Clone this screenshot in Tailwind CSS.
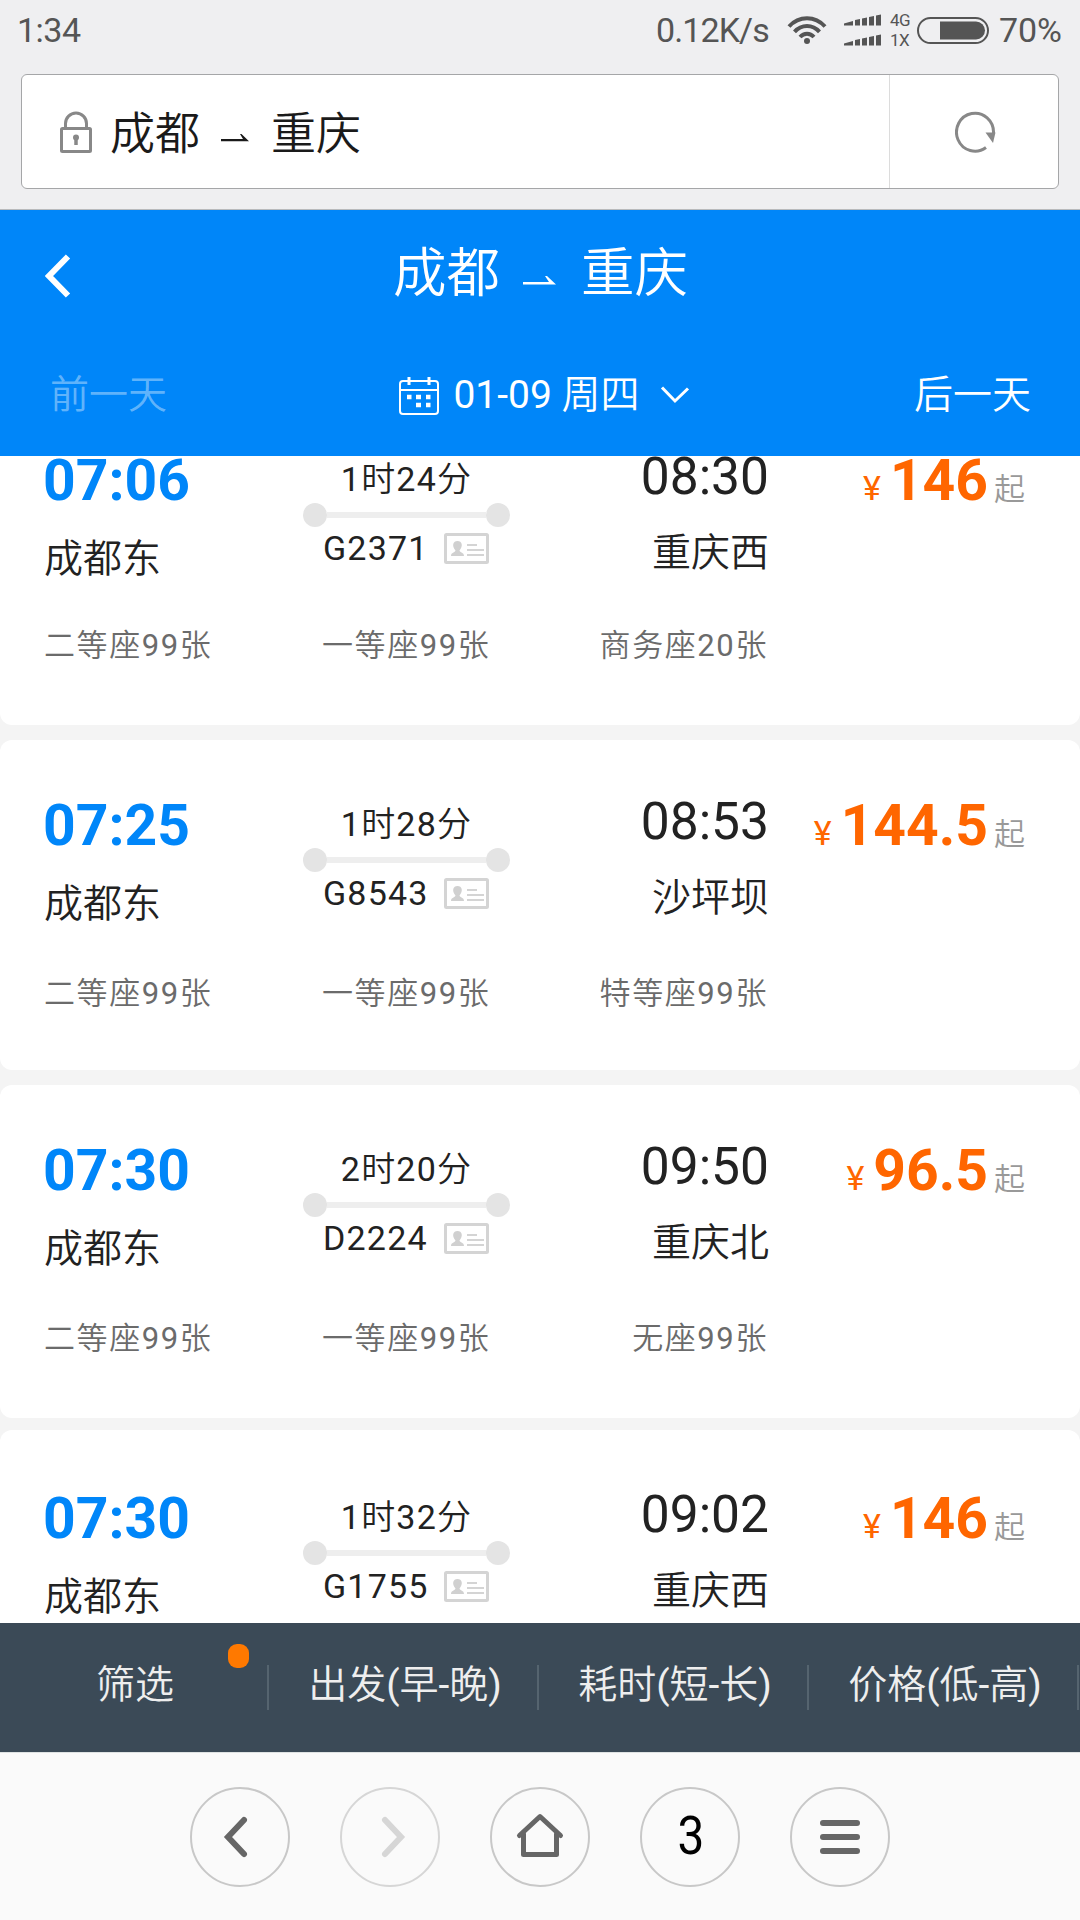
<!DOCTYPE html>
<html lang="zh-CN">
<head>
    <meta charset="UTF-8">
    <meta name="viewport" content="width=device-width, initial-scale=1.0">
    <title>成都 ⇀ 重庆</title>
    <script src="https://cdn.jsdelivr.net/npm/@tailwindcss/browser@4"></script>
</head>
<body class="flex h-[1920px] w-[1080px] flex-col overflow-hidden bg-[#f4f4f4] font-[Roboto,'Noto_Sans_CJK_SC_DemiLight','Noto_Sans_CJK_SC',sans-serif] text-[#222]">

    <!-- Status bar + address bar -->
    <div class="h-[210px] shrink-0 border-b border-[#b9babc] bg-[#efeff1]">
        <div class="flex h-[60px] items-center pl-[17px] pr-[18px] text-[34px] leading-[60px] text-[#555]">
            <span class="tracking-[-0.500px]">1:34</span>
            <span class="ml-auto tracking-[-0.900px]">0.12K/s</span>
            <svg class="ml-[18px] h-[28px] w-[40px]" viewBox="0 0 40 28" fill="none" stroke="#555" stroke-width="4">
                <path d="M2 10.5C12-.5 28-.5 38 10.5M7.500 15.800C14.500 8 25.500 8 32.500 15.800M13 21C17 16.700 23 16.700 27 21"/>
                <circle cx="20" cy="25" r="3" fill="#555" stroke="none"/>
            </svg>
            <svg class="ml-[17px] h-[32px] w-[38px]" viewBox="0 0 38 32" fill="#555">
                <path id="sig" d="M0 11.500V9.500L9 7V11.500ZM11 11.500V6L16 5V11.500ZM18 11.500V4.500L23 3.500V11.500ZM25 11.500V3L30 2V11.500ZM32 11.500V1.500L37 .500V11.500Z"/>
                <use href="#sig" y="20"/>
            </svg>
            <div class="ml-2 w-[27px] text-[17px] leading-5 tracking-[-0.500px]"><p>4G</p><p>1X</p></div>
            <svg class="h-[27px] w-[72px]" viewBox="0 0 72 27" fill="none">
                <rect x="1" y="1" width="70" height="25" rx="12.500" stroke="#555" stroke-width="2"/>
                <path d="M23 4.500H59A9 9 0 0 1 59 22.500H23Z" fill="#555"/>
            </svg>
            <span class="ml-[10px]">70%</span>
        </div>
        <div class="mx-[21px] mt-[14px] flex h-[115px] rounded-[6px] border border-[#a5a6a8] bg-white">
            <div class="flex flex-1 items-center border-r border-[#dcdcdc] pl-[38px] text-[45px] text-[#1a1a1a]">
                <svg class="h-[42px] w-[32px]" viewBox="0 0 32 42" fill="none" stroke="#888" stroke-width="3">
                    <rect x="1.500" y="17.500" width="29" height="23" rx="1"/>
                    <path d="M5.500 17V12.500A10.500 10.500 0 0 1 26.500 12.500V17"/>
                    <circle cx="16" cy="26.500" r="3" fill="#888" stroke="none"/>
                    <path d="M16 27V34" stroke-width="3.500"/>
                </svg>
                <span class="mt-[6px] ml-[18px]">成都</span>
                <svg class="mt-[13px] ml-[21px] h-[8px] w-[28px]" viewBox="0 0 28 8" fill="#1a1a1a"><path d="M0 5H22L19 0H20.500L28 7.200H0Z"/></svg>
                <span class="mt-[6px] ml-[22px]">重庆</span>
            </div>
            <div class="flex w-[168px] items-center justify-center pl-[3px]">
                <svg class="h-[42px] w-[42px]" viewBox="0 0 42 42" fill="none">
                    <path d="M38.500 22A18.500 19 0 1 0 31 36.500" stroke="#888" stroke-width="3"/>
                    <path d="M30.500 21.500H40.500L38 32Z" fill="#888"/>
                </svg>
            </div>
        </div>
    </div>

    <!-- Route header -->
    <header class="h-[246px] shrink-0 bg-[#0086f9] text-white">
        <div class="flex h-[132px] items-center pl-[45px]">
            <svg class="h-[44px] w-[26px]" viewBox="0 0 26 44" fill="none" stroke="#fff" stroke-width="6"><path d="M23 2.500L4 22L23 41.500"/></svg>
            <div class="ml-[322px] flex h-[128px] items-center self-start text-[53.500px] leading-[128px]">
                <span>成都</span>
                <svg class="mt-[12px] ml-[23px] h-[9px] w-[33px]" viewBox="0 0 33 9" fill="#fff"><path d="M0 6H26L22 0H24L33 8.500H0Z"/></svg>
                <span class="ml-[25px]">重庆</span>
            </div>
        </div>
        <div class="flex h-[106px] items-center justify-between pr-[49px] pl-[50px] text-[39px] leading-[106px]">
            <span class="text-white/40">前一天</span>
            <div class="flex items-center pl-[8px]">
                <svg class="mt-[2px] h-[38px] w-[40px]" viewBox="0 0 40 38" fill="none" stroke="#fff" stroke-width="2">
                    <rect x="1" y="4" width="38" height="33" rx="3"/>
                    <path d="M1 13H39"/>
                    <path d="M10 0V8M30 0V8" stroke-width="3"/>
                    <path d="M8 20H12.500M17 20H22M27 20H31.500M17 28H22M27 28H31.500" stroke-width="4.500"/>
                </svg>
                <span class="ml-[14px]">01-09 周四</span>
                <svg class="ml-[20px] h-[20px] w-[30px]" viewBox="0 0 30 20" fill="none" stroke="#fff" stroke-width="3"><path d="M2 2.500L15 16L28 3.500"/></svg>
            </div>
            <span>后一天</span>
        </div>
    </header>

    <!-- Train list, scrolled so that the first card is cut by the header -->
    <main class="flex min-h-0 flex-1 flex-col justify-start overflow-hidden">
        <div id="list" class="-mt-[61px] flex flex-col"></div>
    </main>

    <!-- Sort tabs -->
    <nav class="flex h-[129px] shrink-0 items-center bg-[#3b4a57] text-[39px] leading-[40px] text-[#eee]">
        <div class="relative flex h-[45px] w-[269px] items-center justify-center border-r-2 border-[#55646f] pb-[5px] pl-[3px]">筛选
            <i class="absolute -top-[21px] right-[18px] h-6 w-[21px] rounded-[9px] bg-[#ff7900]"></i>
        </div>
        <div class="flex h-[45px] w-[270px] items-center justify-center border-r-2 border-[#55646f] pb-[5px] pl-[4px]">出发(早-晚)</div>
        <div class="flex h-[45px] w-[270px] items-center justify-center border-r-2 border-[#55646f] pb-[5px] pl-[4px]">耗时(短-长)</div>
        <div class="flex h-[45px] w-[270px] items-center justify-center border-r-2 border-[#55646f] pb-[5px] pl-[4px]">价格(低-高)</div>
    </nav>

    <!-- Browser toolbar -->
    <footer class="flex h-[168px] shrink-0 items-center justify-center gap-[50px] border-t border-[#dfe3e3] bg-[#fafafa]">
        <div class="flex size-[100px] items-center justify-center rounded-full border-2 border-[#c8c8c8]">
            <svg class="size-[96px]" viewBox="0 0 96 96" fill="none" stroke="#666" stroke-width="6" stroke-linecap="round"><path d="M52 31L36 48L52 65"/></svg>
        </div>
        <div class="flex size-[100px] items-center justify-center rounded-full border-2 border-[#d6d6d6]">
            <svg class="size-[96px]" viewBox="0 0 96 96" fill="none" stroke="#d6d6d6" stroke-width="6" stroke-linecap="round"><path d="M43 31L59 48L43 65"/></svg>
        </div>
        <div class="flex size-[100px] items-center justify-center rounded-full border-2 border-[#c8c8c8]">
            <svg class="size-[96px]" viewBox="0 0 96 96" fill="none" stroke="#666" stroke-width="5" stroke-linecap="round" stroke-linejoin="round"><path d="M27.500 46.500L48 27.500L68.500 46.500M31.500 45V65.500H64.500V45"/></svg>
        </div>
        <div class="flex size-[100px] items-center justify-center rounded-full border-2 border-[#c8c8c8] pl-[2px] text-[53px] leading-none text-black"><span class="scale-x-90">3</span></div>
        <div class="flex size-[100px] flex-col items-center justify-center gap-2 rounded-full border-2 border-[#c8c8c8]">
            <i class="h-[6px] w-10 rounded-full bg-[#666]"></i>
            <i class="h-[6px] w-10 rounded-full bg-[#666]"></i>
            <i class="h-[6px] w-10 rounded-full bg-[#666]"></i>
        </div>
    </footer>

    <script>
        const trains = [
            { start: '07:06', end: '08:30', time: '1时24分', no: 'G2371', to: '重庆西', price: '146', seats: ['二等座99张', '一等座99张', '商务座20张'], card: 'h-[330px] mb-[15px] pt-[54px]', seatGap: 'pt-[51px]' },
            { start: '07:25', end: '08:53', time: '1时28分', no: 'G8543', to: '沙坪坝', price: '144.5', seats: ['二等座99张', '一等座99张', '特等座99张'], card: 'h-[330px] mb-[15px] pt-[54px]', seatGap: 'pt-[54px]' },
            { start: '07:30', end: '09:50', time: '2时20分', no: 'D2224', to: '重庆北', price: '96.5', seats: ['二等座99张', '一等座99张', '无座99张'], card: 'h-[333px] mb-[12px] pt-[54px]', seatGap: 'pt-[54px]' },
            { start: '07:30', end: '09:02', time: '1时32分', no: 'G1755', to: '重庆西', price: '146', seats: ['二等座99张', '一等座99张', '商务座20张'], card: 'h-[330px] pt-[57px]', seatGap: 'pt-[54px]' }
        ];

        const idCard = `
            <svg class="h-[31px] w-[45px]" viewBox="0 0 45 31" fill="none" stroke="#d4d4d4" stroke-width="3">
                <rect x="1.500" y="1.500" width="42" height="28" rx="1"/>
                <path d="M23 12H33M23 17H40M23 22H40" stroke-width="2"/>
                <path d="M7 23C7 19 11 20 11.500 17.500C7.500 13 9 8 13.500 8S19.500 13 15.500 17.500C16 20 20 19 20 23Z" fill="#d0d0d0" stroke="none"/>
            </svg>`;

        document.getElementById('list').innerHTML = trains.map(t => `
            <section class="${t.card} shrink-0 rounded-[12px] bg-white pr-[44px] pl-[43px]">
                <div class="flex h-[126px]">
                    <div class="w-[260px]">
                        <p class="h-[66px] text-[57px] leading-[64px] font-bold text-[#0086f9]">${t.start}</p>
                        <p class="mt-[14px] pl-[1px] text-[39px] leading-[60px]">成都东</p>
                    </div>
                    <div class="flex w-[207px] flex-col items-center text-[34px] tracking-[1.200px]">
                        <p class="leading-[60px]">${t.time}</p>
                        <div class="-mt-[6px] flex w-full items-center">
                            <i class="size-6 rounded-full bg-[#e4e4e4]"></i>
                            <i class="h-[6px] flex-1 bg-[#eee]"></i>
                            <i class="size-6 rounded-full bg-[#e4e4e4]"></i>
                        </div>
                        <div class="flex w-full items-center justify-between pr-[21px] pl-[20px] leading-[42px]">${t.no}${idCard}</div>
                    </div>
                    <div class="w-[259px] text-right">
                        <p class="h-[66px] text-[51.500px] leading-[56px]">${t.end}</p>
                        <p class="mt-[8px] text-[39px] leading-[60px]">${t.to}</p>
                    </div>
                    <div class="flex flex-1 items-baseline justify-end pr-[11px] text-[#ff6600]">
                        <span class="text-[34px]">¥</span>
                        <span class="ml-[9px] text-[57px] leading-[64px] font-bold">${t.price}</span>
                        <span class="ml-[6px] text-[31px] text-[#999]">起</span>
                    </div>
                </div>
                <div class="flex ${t.seatGap} w-[725px] pl-px text-[31px] leading-[40px] tracking-[1.600px] text-[#6b6b6b]">
                    <span class="w-[278px]">${t.seats[0]}</span>
                    <span>${t.seats[1]}</span>
                    <span class="ml-auto">${t.seats[2]}</span>
                </div>
            </section>
        `).join('');
    </script>

</body>
</html>
